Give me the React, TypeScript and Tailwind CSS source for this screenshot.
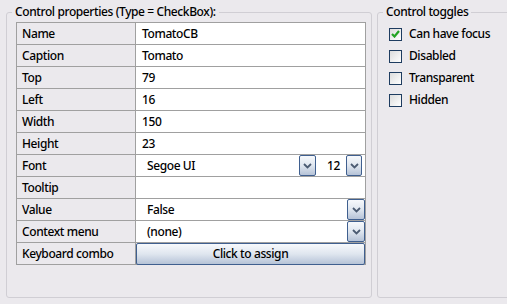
import React from "react";

const Chevron = () => (
  <svg width="9" height="6" viewBox="0 0 9 6" className="block">
    <path d="M1 1 L4.5 4.5 L8 1" fill="none" stroke="#4b5b72" strokeWidth="1.8" />
  </svg>
);

const DropBtn = ({ w = "w-[18px]" }: { w?: string }) => (
  <div
    className={`${w} h-full flex items-center justify-center rounded-[2px] border border-[#3f5f8f] bg-gradient-to-b from-[#f7f9fc] via-[#dfe6ef] to-[#b6c3d7]`}
  >
    <Chevron />
  </div>
);

const Row = ({ label, children, white = true }: { label: string; children?: React.ReactNode; white?: boolean }) => (
  <div className="flex h-[22px]">
    <div className="w-[119px] shrink-0 border-r border-b border-[#a0a0a0] pl-[5px] flex items-center">{label}</div>
    <div className={`flex-1 border-r border-b border-[#a0a0a0] flex items-center ${white ? "bg-white" : ""}`}>{children}</div>
  </div>
);

const Check = ({ checked, label }: { checked?: boolean; label: string }) => (
  <div className="flex items-center h-[22px]">
    <div className="w-[13px] h-[13px] border border-[#1e3c60] bg-gradient-to-br from-[#dcdcdc] to-[#ffffff] flex items-center justify-center">
      {checked && (
        <svg width="9" height="8" viewBox="0 0 9 8">
          <path d="M1 4 L3.5 6.5 L8 1" fill="none" stroke="#22a322" strokeWidth="2.2" />
        </svg>
      )}
    </div>
    <span className="ml-[7px]">{label}</span>
  </div>
);

export default function App() {
  return (
    <div
      className="w-[507px] h-[304px] bg-[#ebe9ed] overflow-hidden flex text-[12px] text-black leading-none tracking-[-0.4px] font-medium"
      style={{ fontFamily: '"Noto Sans", "Open Sans", sans-serif' }}
    >
      <fieldset className="ml-[6px] mt-[4px] w-[366px] h-[294px] border border-[#d0ced4] rounded-[3px] px-0 shrink-0">
        <legend className="ml-[5px] px-[3px] h-[16px] leading-[16px]">Control properties (Type = CheckBox):</legend>
        <div className="mt-[2px] ml-[9px] w-[350px] border-l border-t border-[#a0a0a0]">
          <Row label="Name"><span className="pl-[6px]">TomatoCB</span></Row>
          <Row label="Caption"><span className="pl-[6px]">Tomato</span></Row>
          <Row label="Top"><span className="pl-[6px]">79</span></Row>
          <Row label="Left"><span className="pl-[6px]">16</span></Row>
          <Row label="Width"><span className="pl-[6px]">150</span></Row>
          <Row label="Height"><span className="pl-[6px]">23</span></Row>
          <Row label="Font">
            <div className="flex h-full w-full">
              <div className="flex-1 flex items-center pl-[11px]">Segoe UI</div>
              <DropBtn w="w-[17px]" />
              <div className="w-[30px] flex items-center justify-end pr-[6px]">12</div>
              <DropBtn w="w-[16px]" />
              <div className="w-[3px]" />
            </div>
          </Row>
          <Row label="Tooltip" />
          <Row label="Value">
            <div className="flex h-full w-full">
              <div className="flex-1 flex items-center pl-[11px]">False</div>
              <DropBtn />
            </div>
          </Row>
          <Row label="Context menu">
            <div className="flex h-full w-full">
              <div className="flex-1 flex items-center pl-[11px]">(none)</div>
              <DropBtn />
            </div>
          </Row>
          <Row label="Keyboard combo" white={false}>
            <div className="w-full h-[22px] -mb-px rounded-[2px] border border-[#3f5f8f] bg-gradient-to-b from-[#f7f9fc] via-[#dfe6ef] to-[#b6c3d7] flex items-center justify-center">
              Click to assign
            </div>
          </Row>
        </div>
      </fieldset>
      <fieldset className="ml-[5px] mt-[4px] w-[160px] h-[294px] border border-[#d0ced4] rounded-[3px] px-0 shrink-0">
        <legend className="ml-[5px] px-[3px] h-[16px] leading-[16px]">Control toggles</legend>
        <div className="mt-[3px] ml-[11px]">
          <Check checked label="Can have focus" />
          <Check label="Disabled" />
          <Check label="Transparent" />
          <Check label="Hidden" />
        </div>
      </fieldset>
    </div>
  );
}
